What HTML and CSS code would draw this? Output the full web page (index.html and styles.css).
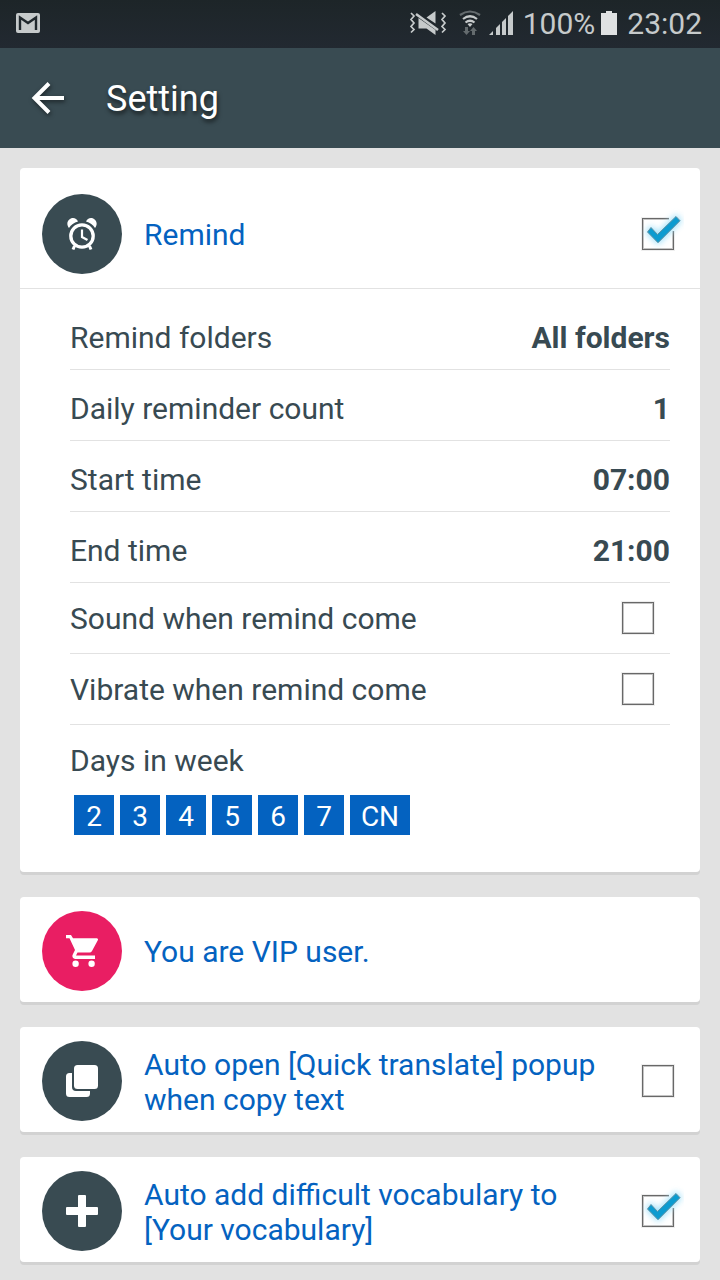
FILE: index.html
```html
<!DOCTYPE html>
<html lang="en">
<head>
<meta charset="utf-8">
<meta name="viewport" content="width=device-width, initial-scale=1">
<title>Setting</title>
<link rel="stylesheet" href="styles.css">
</head>
<body>
<div class="status-bar">
  <svg class="status-mail" width="24" height="20" viewBox="0 0 24 20" aria-hidden="true"><rect width="24" height="20" rx="2" fill="#c6cacb"/><path d="M4 17V4.500L12 10l8-5.500V17" fill="none" stroke="#20282d" stroke-width="2.400"/></svg>
  <div class="status-right">
    <svg class="status-mute" width="38" height="26" viewBox="0 0 38 26" aria-hidden="true"><path d="M26.500 1v12.500L17.500 7.500z M9.500 8l17 12v5l-9-6.500h-8z" fill="#c6cacb"/><path d="M7 4l22 16" stroke="#c6cacb" stroke-width="2.600"/><path d="M2 3l3 3-3 3.500 3 3.500-3 3.500 3 3-3 3M33 3l3 3-3 3.500 3 3.500-3 3.500 3 3-3 3" fill="none" stroke="#c6cacb" stroke-width="1.700"/></svg>
    <svg class="status-wifi" width="22" height="26" viewBox="0 0 22 26" aria-hidden="true"><path d="M1 5q10-7 20 0" fill="none" stroke="#646b6e" stroke-width="2.200"/><path d="M4 9q7-5.500 14 0M6.500 12.500q4.500-3.500 9 0" fill="none" stroke="#c6cacb" stroke-width="2.200"/><path d="M8.500 14q2.500-1.500 5 0L11 17z" fill="#c6cacb"/><path d="M6 17h3v4h2l-3.500 4L4 21h2z M13 25v-4h-2l3.500-4 3.500 4h-2v4z" fill="#646b6e"/></svg>
    <svg class="status-signal" width="24" height="24" viewBox="0 0 24 24" aria-hidden="true"><path d="M0 24l4-4v4zM7 24v-7l4-4v11zM13 24V11l4-4v17zM19 24V5l5-5v24z" fill="#c6cacb"/></svg>
    <span>100%</span>
    <svg class="status-battery" width="16" height="24" viewBox="0 0 16 24" aria-hidden="true"><path d="M5 0h6v2h5v22H0V2h5z" fill="#dfe1e2"/></svg>
    <span>23:02</span>
  </div>
</div>
<header class="app-bar">
  <button class="back" type="button" aria-label="Back"><svg width="36" height="36" viewBox="0 0 36 36" aria-hidden="true"><path d="M34 18H5M19 3.500L4.500 18 19 32.500" fill="none" stroke="#fff" stroke-width="4"/></svg></button>
  <h1 class="title">Setting</h1>
</header>
<main class="cards">
  <section class="card">
    <label class="card-head main-head">
      <span class="badge"><svg width="32" height="34" viewBox="0 0 32 34" aria-hidden="true"><path d="M3 11C-1 6 3 1 7 1q3.500 0 5 3.500Q6 6 3 11zM29 11c4-5 0-10-4-10q-3.500 0-5 3.500 6 1.500 9 6.500z" fill="#fff"/><circle cx="16" cy="19" r="11.200" fill="none" stroke="#fff" stroke-width="3.300"/><path d="M16 12.500V20l5.500 3" fill="none" stroke="#fff" stroke-width="2.200"/><path d="M8.500 29l-1.500 3.500M23.500 29l1.500 3.500" stroke="#fff" stroke-width="3"/></svg></span>
      <span class="heading">Remind</span>
      <span class="check"><input type="checkbox" checked><svg class="tick" width="52" height="48" viewBox="0 0 52 48" aria-hidden="true"><path d="M37 8h7v15h-7z" fill="#fff"/><path class="tick-glow" d="M15.500 24l3.500-4.500 6.500 7L44 8.500l4 4.200-22 22z"/><path class="tick-mark" d="M15.500 24l3.500-4.500 6.500 7L44 8.500l4 4.200-22 22z"/></svg></span>
    </label>
    <div class="details">
      <div class="row"><span>Remind folders</span><strong>All folders</strong></div>
      <div class="row"><span>Daily reminder count</span><strong>1</strong></div>
      <div class="row"><span>Start time</span><strong>07:00</strong></div>
      <div class="row"><span>End time</span><strong>21:00</strong></div>
      <label class="row toggle"><span>Sound when remind come</span><span class="check"><input type="checkbox"></span></label>
      <label class="row toggle"><span>Vibrate when remind come</span><span class="check"><input type="checkbox"></span></label>
      <div class="row week">Days in week</div>
      <div class="days">
        <button type="button" class="day">2</button>
        <button type="button" class="day">3</button>
        <button type="button" class="day">4</button>
        <button type="button" class="day">5</button>
        <button type="button" class="day">6</button>
        <button type="button" class="day">7</button>
        <button type="button" class="day wide">CN</button>
      </div>
    </div>
  </section>
  <section class="card">
    <div class="card-head">
      <span class="badge pink"><svg width="32" height="32" viewBox="0 0 32 32" aria-hidden="true"><path d="M0 0h5l2 3.300h24q1.500.500.800 2L26 16q-.8 1.500-2.500 1.500H11.500L10 20.500h19V24H9q-4-1-2-5l2-4L3.500 3.300H0z" fill="#fff"/><circle cx="9.600" cy="28.800" r="3.200" fill="#fff"/><circle cx="25.600" cy="28.800" r="3.200" fill="#fff"/></svg></span>
      <span class="heading">You are VIP user.</span>
    </div>
  </section>
  <section class="card">
    <label class="card-head">
      <span class="badge"><svg width="32" height="32" viewBox="0 0 32 32" aria-hidden="true"><rect x="8" width="24" height="24" rx="3.500" fill="#fff"/><path d="M6 8v14q0 4 4 4h14v2.500q0 3.500-3.500 3.500h-17Q0 32 0 28.500v-17Q0 8 3.500 8z" fill="#fff"/></svg></span>
      <span class="heading">Auto open [Quick translate] popup when copy text</span>
      <span class="check"><input type="checkbox"></span>
    </label>
  </section>
  <section class="card">
    <label class="card-head">
      <span class="badge"><svg width="32" height="32" viewBox="0 0 32 32" aria-hidden="true"><rect x="12" width="8" height="32" rx="1" fill="#fff"/><rect y="12" width="32" height="8" rx="1" fill="#fff"/></svg></span>
      <span class="heading">Auto add difficult vocabulary to [Your vocabulary]</span>
      <span class="check"><input type="checkbox" checked><svg class="tick" width="52" height="48" viewBox="0 0 52 48" aria-hidden="true"><path d="M37 8h7v15h-7z" fill="#fff"/><path class="tick-glow" d="M15.500 24l3.500-4.500 6.500 7L44 8.500l4 4.200-22 22z"/><path class="tick-mark" d="M15.500 24l3.500-4.500 6.500 7L44 8.500l4 4.200-22 22z"/></svg></span>
    </label>
  </section>
</main>
</body>
</html>
```
FILE: styles.css
```css
* {
  box-sizing: border-box;
}

body {
  margin: 0;
  background: #e2e2e2;
  color: #384a52;
  font-family: Roboto, "Noto Sans", sans-serif;
  font-size: 30px;
  line-height: 35px;
}

.status-bar {
  display: flex;
  align-items: center;
  justify-content: space-between;
  height: 48px;
  padding: 0 18px 2px 16px;
  background: linear-gradient(#1d2528, #222931);
  color: #c6cacb;
}

.status-right {
  display: flex;
  align-items: center;
}

.status-wifi {
  margin-left: 12px;
}

.status-signal {
  margin: 0 10px 0 8px;
}

.status-battery {
  margin: 0 10px 0 6px;
}

.app-bar {
  display: flex;
  align-items: center;
  gap: 40px;
  height: 100px;
  padding: 0 30px;
  background: #394b52;
  color: #fff;
}

.back {
  display: flex;
  padding: 0;
  border: 0;
  background: none;
  filter: drop-shadow(1px 2px 2px rgba(0, 0, 0, 0.5));
}

.title {
  margin: 0;
  padding-top: 2px;
  font-size: 36px;
  font-weight: 400;
  line-height: 42px;
  text-shadow: 1px 3px 4px rgba(0, 0, 0, 0.6);
}

.cards {
  display: grid;
  gap: 25px;
  padding: 20px 20px 18px;
}

.card {
  border-radius: 4px;
  background: #fff;
  box-shadow: 0 3px 0 #d2d2d2;
}

.card-head {
  display: flex;
  align-items: center;
  gap: 22px;
  padding: 14px 26px 11px 22px;
}

.main-head {
  padding-top: 26px;
  padding-bottom: 14px;
  border-bottom: 1px solid #e2e2e2;
}

.badge {
  display: flex;
  flex: none;
  align-items: center;
  justify-content: center;
  width: 80px;
  height: 80px;
  border-radius: 50%;
  background: #394b52;
}

.pink {
  background: #e91e63;
}

.heading {
  flex: 1;
  padding-top: 1px;
  color: #0462c0;
}

.check {
  position: relative;
  display: flex;
  flex: none;
}

.check input {
  width: 32px;
  height: 32px;
  margin: 0;
  border: 1px solid #686868;
  outline: 1px solid #eeeeee;
  box-shadow: inset 0 0 0 1px #c4c4c4;
  appearance: none;
}

.tick {
  position: absolute;
  top: -10px;
  left: -10px;
}

.tick-glow {
  fill: #9fe0fa;
  stroke: #9fe0fa;
  stroke-width: 3px;
  filter: blur(3px);
}

.tick-mark {
  fill: #0c9bd0;
  stroke: #5f91a3;
  stroke-width: 1px;
}

.details {
  padding: 10px 30px 37px 50px;
}

.row {
  display: flex;
  align-items: center;
  justify-content: space-between;
  height: 71px;
  padding-top: 7px;
  border-bottom: 1px solid #e2e2e2;
}

.row strong {
  font-weight: 700;
}

.toggle {
  padding: 0 16px 0 0;
}

.week {
  height: 70px;
  padding-top: 0;
  border: 0;
}

.days {
  display: flex;
  gap: 6px;
  padding: 0 4px;
}

.day {
  width: 40px;
  height: 40px;
  padding: 2px 0 0;
  border: 0;
  background: #0462c0;
  color: #fff;
  font-family: inherit;
  font-size: 28px;
}

.wide {
  width: 60px;
}
```
